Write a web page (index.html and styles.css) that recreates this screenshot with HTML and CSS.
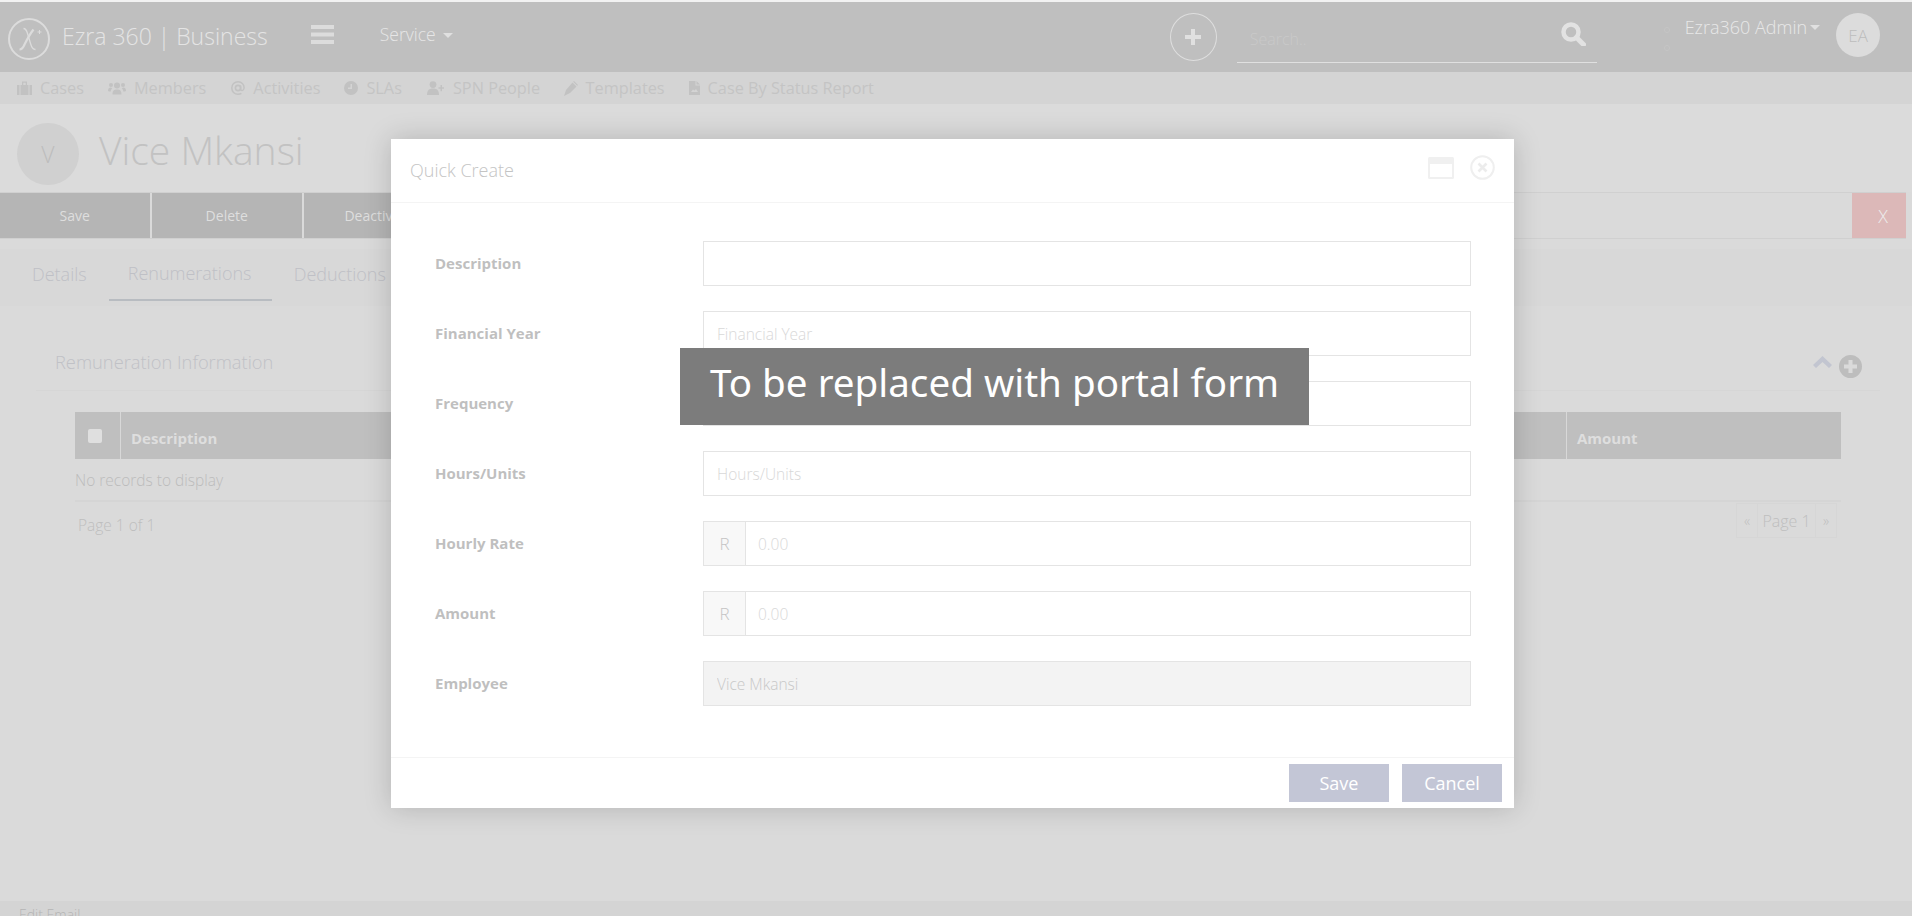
FILE: index.html
```html
<!DOCTYPE html>
<html lang="en">
<head>
<meta charset="utf-8">
<title>Ezra 360 | Business</title>
<link rel="stylesheet" href="styles.css">
</head>
<body>
<div class="page">
  <header class="topbar">
    <svg class="logo" viewBox="0 0 44 44" width="44" height="44"><circle cx="22" cy="22" r="20" fill="none" stroke="#dcdcdc" stroke-width="2"/><path d="M16.500 11.500c2 0 3 1.500 4 5l3 10c1 3.500 2.500 6 5 6" fill="none" stroke="#dcdcdc" stroke-width="1.300"/><path d="M26.500 12.500c-4 5-7 11-9 15-1 2.500-2.500 5-5 5" fill="none" stroke="#dcdcdc" stroke-width="2.200"/><path d="M30.500 15h4M32.500 13v4" stroke="#dcdcdc" stroke-width="1"/></svg>
    <div class="brand">Ezra 360 | Business</div>
    <svg class="burger" viewBox="0 0 23 19" width="23" height="19"><path d="M0 0h23v4H0zM0 7.500h23v4H0zM0 15h23v4H0z" fill="#dcdcdc"/></svg>
    <div class="service">Service<span class="caret"></span></div>
    <div class="plus-circle"><svg viewBox="0 0 16 16" width="16" height="16"><path d="M6 0h4v6h6v4h-6v6H6v-6H0V6h6z" fill="#e0e0e0"/></svg></div>
    <div class="search">
      <span class="search-hint">Search..</span>
      <svg viewBox="0 0 25 24" width="25" height="24"><circle cx="10" cy="10" r="7.500" fill="none" stroke="#e2e2e2" stroke-width="4.500"/><path d="M15.500 15.500l7 7" stroke="#e2e2e2" stroke-width="5" stroke-linecap="round"/></svg>
    </div>
    <div class="dots"><i></i><i></i></div>
    <div class="user">Ezra360 Admin<span class="caret small"></span></div>
    <div class="user-avatar">EA</div>
  </header>

  <nav class="subnav">
    <a class="subnav-item sn-cases"><svg viewBox="0 0 15 14" width="15" height="14"><path d="M0 4h2.500v10H0zM3.500 4h8v10h-8zM12.500 4H15v10h-2.500zM5 .5h5V4H8.700V1.800H6.300V4H5z" fill="#c2c2c2"/></svg>Cases</a>
    <a class="subnav-item sn-members"><svg viewBox="0 0 18 13" width="18" height="13"><circle cx="9" cy="3.500" r="3" fill="#c2c2c2"/><circle cx="3" cy="3" r="2" fill="#c2c2c2"/><circle cx="15" cy="3" r="2" fill="#c2c2c2"/><path d="M4.500 12.500c0-4 1.500-5 4.500-5s4.500 1 4.500 5zM0 9c0-2.500 1-3.500 3-3.500l1.200 1c-1 .8-1.500 1.800-1.500 3H1zM18 9c0-2.500-1-3.500-3-3.500l-1.200 1c1 .8 1.500 1.800 1.500 3H17z" fill="#c2c2c2"/></svg>Members</a>
    <a class="subnav-item sn-activities"><svg viewBox="0 0 14 14" width="14" height="14"><circle cx="7" cy="7" r="2.600" fill="none" stroke="#c2c2c2" stroke-width="1.600"/><path d="M9.600 4.500v3.700c0 1.800 3 1.800 3.400-.7C13.500 3.500 10.800.8 7 .8 3.400.8.800 3.500.8 7s2.600 6.200 6.200 6.200c1.300 0 2.500-.3 3.400-.9" fill="none" stroke="#c2c2c2" stroke-width="1.500"/></svg>Activities</a>
    <a class="subnav-item sn-slas"><svg viewBox="0 0 14 14" width="14" height="14"><path d="M7 0a7 7 0 1 0 0 14A7 7 0 0 0 7 0zm1 8H4V6.500h2.500V3H8z" fill="#c2c2c2" fill-rule="evenodd"/></svg>SLAs</a>
    <a class="subnav-item sn-spn"><svg viewBox="0 0 17 14" width="17" height="14"><circle cx="6" cy="3.600" r="3.400" fill="#c2c2c2"/><path d="M0 14c0-4.500 2-6.500 6-6.500s6 2 6 6.500zM13.500 4H15v2.300h2v1.500h-2v2.400h-1.500V7.800H11.500V6.300h2z" fill="#c2c2c2"/></svg>SPN People</a>
    <a class="subnav-item sn-templates"><svg viewBox="0 0 15 15" width="15" height="15"><path d="M9.500 1.500l4 4L7 12 1 15l2-6zM11 0l4 4-.8.800-4-4z" fill="#c2c2c2"/></svg>Templates</a>
    <a class="subnav-item sn-report"><svg viewBox="0 0 11 14" width="11" height="14"><path fill-rule="evenodd" d="M0 0h6.500v4.500H11V14H0zM2 11h7L7 8l-1.500 1.500L4 8.500zM7.500 0L11 3.500H7.500z" fill="#c2c2c2"/></svg>Case By Status Report</a>
  </nav>

  <section class="identity">
    <div class="id-avatar">V</div>
    <h1 class="id-name">Vice Mkansi</h1>
  </section>

  <div class="actions">
    <button class="act">Save</button>
    <button class="act">Delete</button>
    <button class="act">Deactivate</button>
    <button class="act-close">X</button>
  </div>

  <div class="tabs">
    <a class="tab">Details</a>
    <a class="tab tab-active">Renumerations</a>
    <a class="tab">Deductions</a>
  </div>

  <section class="panel">
    <div class="panel-head">
      <h2 class="panel-title">Remuneration Information</h2>
      <svg class="chev" viewBox="0 0 19 12" width="19" height="12"><path d="M9.500 0L19 9l-3 3-6.500-6L3 12 0 9z" fill="#c2c5d0"/></svg>
      <svg class="add" viewBox="0 0 23 23" width="23" height="23"><path d="M11.500 0a11.500 11.500 0 1 0 0 23 11.500 11.500 0 0 0 0-23zM9.500 5h4v4.500H18v4h-4.500V18h-4v-4.500H5v-4h4.500z" fill="#bdbdbd" fill-rule="evenodd"/></svg>
    </div>
    <div class="grid">
      <div class="grid-head">
        <div class="gh-check"><span class="check"></span></div>
        <div class="gh-desc">Description</div>
        <div class="gh-amount">Amount</div>
      </div>
      <div class="grid-row">No records to display</div>
      <div class="grid-foot">
        <span class="page-info">Page 1 of 1</span>
        <div class="pager"><span class="pg-arrow">«</span><span class="pg-cur">Page 1</span><span class="pg-arrow">»</span></div>
      </div>
    </div>
  </section>

  <footer class="foot">Edit Email</footer>
</div>

<div class="modal">
  <div class="modal-head">
    <span class="modal-title">Quick Create</span>
    <svg viewBox="0 0 26 22" width="26" height="22"><rect x="0" y="0" width="26" height="22" rx="1.500" fill="#f0f0f0"/><rect x="2" y="7" width="22" height="13" fill="#fff"/></svg>
    <svg class="modal-x" viewBox="0 0 25 25" width="25" height="25"><circle cx="12.500" cy="12.500" r="11.300" fill="none" stroke="#efefef" stroke-width="2"/><path d="M8.500 8.500l8 8M16.500 8.500l-8 8" stroke="#ececec" stroke-width="2.600"/></svg>
  </div>
  <form class="modal-body">
    <div class="field"><label class="field-label">Description</label><input class="field-input" type="text"></div>
    <div class="field"><label class="field-label">Financial Year</label><input class="field-input" type="text" placeholder="Financial Year"></div>
    <div class="field"><label class="field-label">Frequency</label><input class="field-input" type="text"></div>
    <div class="field"><label class="field-label">Hours/Units</label><input class="field-input" type="text" placeholder="Hours/Units"></div>
    <div class="field"><label class="field-label">Hourly Rate</label><div class="money"><span class="money-r">R</span><input class="money-input" type="text" placeholder="0.00"></div></div>
    <div class="field"><label class="field-label">Amount</label><div class="money"><span class="money-r">R</span><input class="money-input" type="text" placeholder="0.00"></div></div>
    <div class="field"><label class="field-label">Employee</label><input class="field-input field-off" type="text" value="Vice Mkansi" readonly></div>
  </form>
  <div class="modal-foot">
    <button class="modal-btn" type="button">Save</button>
    <button class="modal-btn" type="button">Cancel</button>
  </div>
</div>

<div class="banner">To be replaced with portal form</div>
</body>
</html>
```

FILE: styles.css
```css
* { box-sizing: border-box; }
html, body { margin: 0; height: 100%; }
body { overflow: hidden; background: #dadada; font-family: "Open Sans", "Liberation Sans", sans-serif; color: #c2c2c2; }
h1, h2 { margin: 0; font-weight: 300; }
button { font-family: inherit; border: 0; padding: 0; }

.page { height: 916px; display: flex; flex-direction: column; padding-top: 2px; background: #dadada; box-shadow: inset 0 2px 0 #f2f2f2; }

/* top bar */
.topbar { flex: none; height: 70px; background: #bfbfbf; display: flex; align-items: center; color: #e2e2e2; }
.logo { margin-left: 7px; margin-top: 3px; }
.brand { margin-left: 11px; margin-top: -3px; font-size: 23px; font-weight: 300; color: #e4e4e4; white-space: nowrap; }
.burger { margin-left: 43px; margin-top: -6px; }
.service { margin-left: 46px; margin-top: -7px; font-size: 17.500px; font-weight: 300; color: #e6e6e6; display: flex; align-items: center; }
.caret { display: inline-block; margin-left: 7px; margin-top: 3px; border: 5px solid transparent; border-top-color: #e0e0e0; border-bottom: 0; }
.caret.small { margin-left: 3px; margin-top: 0; }
.plus-circle { margin-left: 717px; width: 47px; height: 48px; border: 1px solid #dedede; border-radius: 50%; display: flex; align-items: center; justify-content: center; }
.search { margin-left: 20px; margin-top: -1px; width: 360px; height: 52px; border-bottom: 1px solid #e0e0e0; display: flex; align-items: center; justify-content: space-between; padding: 0 11px 0 13px; }
.search-hint { font-size: 16px; font-weight: 300; color: #c9c9c9; margin-top: 6px; }
.search svg { margin-top: -4px; }
.dots { margin-left: 67px; display: flex; flex-direction: column; gap: 12px; margin-top: 3px; }
.dots i { width: 6px; height: 6px; border: 1px solid #c5c5c5; border-radius: 50%; }
.user { margin-left: 15px; margin-top: -20px; font-size: 18px; font-weight: 300; color: #e8e8e8; white-space: nowrap; display: flex; align-items: center; }
.user-avatar { margin-left: 16px; margin-top: -4px; width: 44px; height: 44px; border-radius: 50%; background: #dcdcdc; color: #bdbdbd; font-size: 17px; font-weight: 300; display: flex; align-items: center; justify-content: center; }

/* sub nav */
.subnav { flex: none; height: 32px; background: #d4d4d4; display: flex; align-items: center; font-size: 16.300px; font-weight: 400; color: #c4c4c4; white-space: nowrap; }
.subnav-item { display: flex; align-items: center; gap: 8px; }
.sn-cases { margin-left: 17px; }
.sn-members { margin-left: 24px; }
.sn-activities { margin-left: 25px; }
.sn-slas { margin-left: 24px; }
.sn-spn { margin-left: 25px; gap: 9px; }
.sn-templates { margin-left: 22.500px; }
.sn-report { margin-left: 24px; }

/* identity */
.identity { flex: none; height: 88px; background: #dbdbdb; display: flex; align-items: flex-start; padding: 19px 0 0 17px; }
.id-avatar { width: 62px; height: 62px; border-radius: 50%; background: #d0d0d0; color: #bdbdbd; font-size: 23px; font-weight: 300; display: flex; align-items: center; justify-content: center; }
.id-name { margin-left: 20px; margin-top: -2px; font-size: 39px; line-height: 58px; color: #c2c2c2; }

/* actions */
.actions { flex: none; height: 47px; width: 1906px; border-bottom: 1px solid #d0d0d0; border-top: 1px solid #d0d0d0; display: flex; gap: 2.500px; }
.act { width: 149.500px; background: #b5b5b5; color: #dedede; font-size: 14px; font-weight: 400; }
.act-close { margin-left: auto; width: 54px; padding-left: 8px; background: #dcb8b8; color: #ececec; font-size: 18px; font-weight: 300; }

/* tabs */
.tabs { flex: none; margin-top: 10px; height: 57px; background: #d8d8d8; display: flex; align-items: flex-start; padding: 0 0 0 12px; gap: 2px; font-size: 18px; font-weight: 300; color: #bfc0c6; }
.tab { padding: 14px 20px 0; height: 52px; white-space: nowrap; line-height: 23px; }
.tab-active { padding: 13px 0 0 19px; width: 163px; border-bottom: 2px solid #b8bcc1; }

/* panel */
.panel { flex: none; margin: 0 32px 0 36px; }
.panel-head { height: 85px; padding: 44px 0 0 19px; border-bottom: 1px solid #d6d6d6; display: flex; align-items: flex-start; }
.panel-title { font-size: 18.300px; line-height: 24px; color: #c0c1c6; flex: 1; }
.chev { margin-top: 6px; margin-right: 7px; }
.add { margin-top: 5px; margin-right: 18px; }
.grid { margin: 21px 39px 0 39px; }
.grid-head { height: 47px; background: #bfbfbf; display: flex; color: #dedede; font-size: 15px; font-weight: 700; }
.gh-check { width: 46px; border-right: 1px solid #d8d8d8; padding: 17px 0 0 13px; }
.check { display: block; width: 14px; height: 14px; border-radius: 2px; background: #dfdfdf; }
.gh-desc { width: 1446px; padding: 16px 0 0 10px; border-right: 1px solid #d8d8d8; }
.gh-amount { flex: 1; padding: 16px 0 0 10px; }
.grid-row { height: 43px; border-bottom: 2px solid #d5d5d5; font-size: 15.500px; font-weight: 300; line-height: 42px; color: #bcbcbc; }
.grid-foot { display: flex; justify-content: space-between; padding: 1px 4px 0 3px; font-size: 15.500px; font-weight: 300; color: #bebebe; }
.page-info { line-height: 44px; }
.pager { display: flex; height: 35px; border: 1px solid #d6d6d6; font-size: 16px; }
.pager span { display: flex; align-items: center; justify-content: center; }
.pg-arrow { width: 20px; font-size: 14px; }
.pg-cur { width: 59px; border-left: 1px solid #d6d6d6; border-right: 1px solid #d6d6d6; }

.foot { margin-top: auto; flex: none; height: 15px; overflow: hidden; background: #d4d4d4; font-size: 14px; font-weight: 300; padding: 4px 0 0 19px; line-height: 20px; color: #b5b5b5; }

/* modal */
.modal { position: absolute; left: 391px; top: 139px; width: 1123px; height: 669px; background: #fff; box-shadow: 0 0 26px rgba(0, 0, 0, .18); display: flex; flex-direction: column; }
.modal-head { flex: none; height: 64px; border-bottom: 1px solid #f4f4f4; display: flex; align-items: center; padding: 0 19px; margin-bottom: 38px; }
.modal-head svg { margin-top: -6px; }
.modal-title { flex: 1; margin-top: -2px; font-size: 18px; font-weight: 300; color: #c4c4c4; }
.modal-x { margin-left: 16px; }
.modal-body { flex: none; display: flex; flex-direction: column; gap: 25px; padding: 0 43px 0 44px; }
.field { display: flex; align-items: center; height: 45px; }
.field-label { width: 268px; font-size: 15px; font-weight: 700; color: #bfbfbf; margin-top: -1px; }
.field-input { width: 768px; height: 45px; border: 1px solid #e4e4e4; background: #fff; padding: 0 13px; font: 300 15.500px "Open Sans", sans-serif; color: #c8c8c8; outline: 0; }
.field-input::placeholder, .money-input::placeholder { color: #d8d8d8; opacity: 1; }
.field-off { background: #f3f3f3; }
.money { width: 768px; height: 45px; display: flex; border: 1px solid #e4e4e4; }
.money-r { width: 42px; background: #f8f8f8; border-right: 1px solid #e4e4e4; display: flex; align-items: center; justify-content: center; font-size: 17px; font-weight: 300; color: #c4c4c4; }
.money-input { flex: 1; min-width: 0; border: 0; padding: 0 12px; font: 300 15.500px "Open Sans", sans-serif; outline: 0; }
.modal-foot { margin-top: auto; height: 51px; border-top: 1px solid #f4f4f4; display: flex; justify-content: flex-end; gap: 13px; padding: 6px 12px 0 0; }
.modal-btn { width: 100px; height: 38px; background: #c3c6d6; color: #fff; font-size: 18px; font-weight: 400; }

/* banner */
.banner { position: absolute; left: 680px; top: 348px; width: 629px; height: 77px; background: #7c7c7c; color: #fff; font-family: "Noto Sans", sans-serif; font-size: 38.600px; line-height: 68px; padding-left: 30px; white-space: nowrap; }
```
